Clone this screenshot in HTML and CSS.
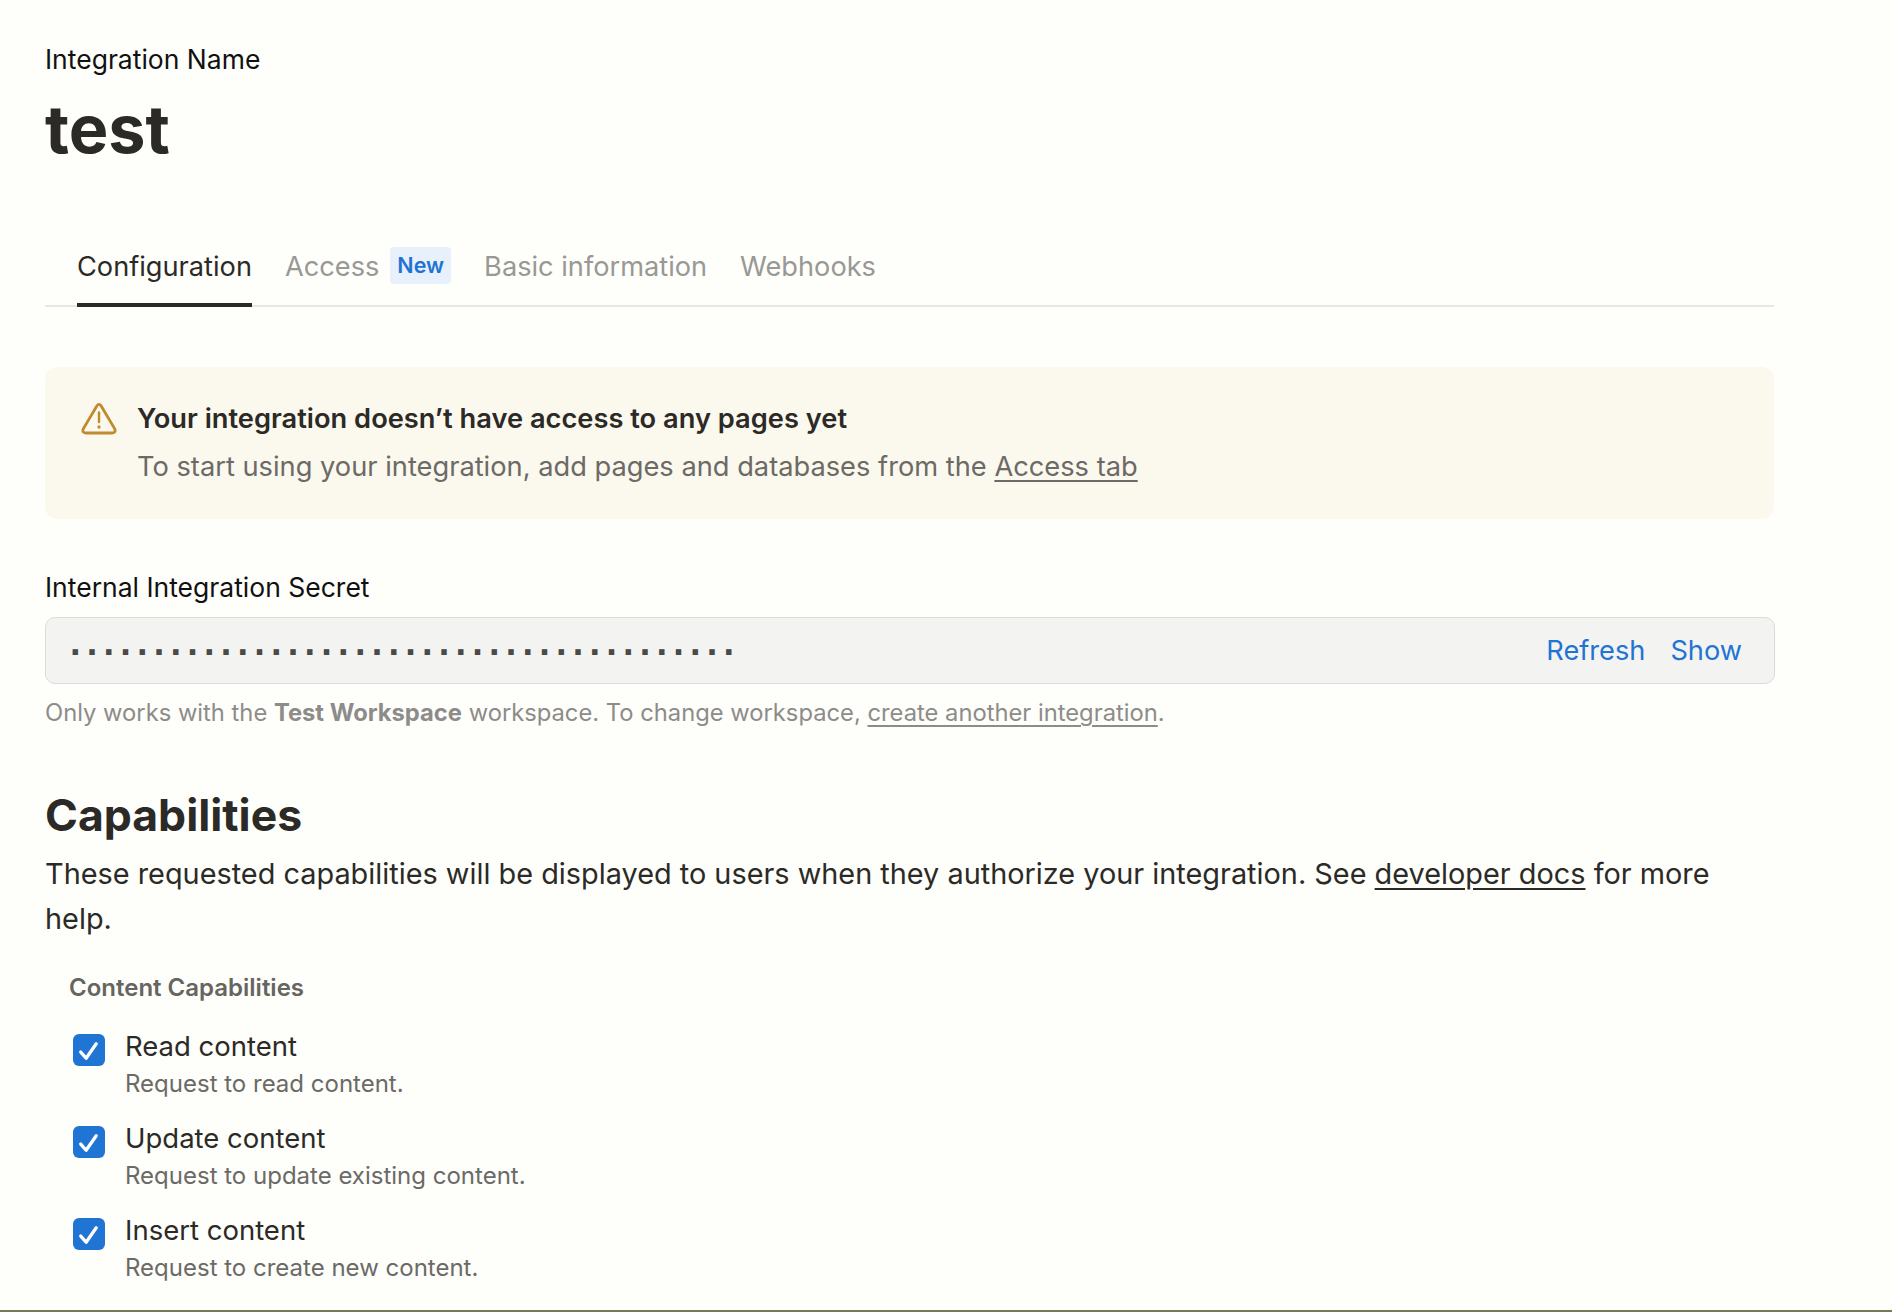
FILE: index.html
```html
<!DOCTYPE html>
<html lang="en">
<head>
<meta charset="utf-8">
<title>test</title>
<link rel="stylesheet" href="styles.css">
</head>
<body>
<main class="page">
  <div class="name-label">Integration Name</div>
  <h1 class="title">test</h1>
  <nav class="tabs">
    <a class="tab active">Configuration</a>
    <a class="tab">Access<span class="badge">New</span></a>
    <a class="tab">Basic information</a>
    <a class="tab">Webhooks</a>
  </nav>
  <section class="banner">
    <svg class="warn" viewBox="0 0 36 33" width="36" height="33" fill="none" stroke="#c08a2e" stroke-width="2.8" stroke-linejoin="round">
      <path d="M15.8 4 Q18 0.8 20.2 4 L33.6 26.6 Q35.4 31 31 31 H5 Q0.6 31 2.4 26.6 Z"/>
      <path d="M18 10.5 V20" stroke-linecap="round" stroke-width="2.4"/>
      <circle cx="18" cy="25" r="0.7" stroke-width="2"/>
    </svg>
    <div class="banner-text">
      <div class="banner-title">Your integration doesn’t have access to any pages yet</div>
      <div class="banner-body">To start using your integration, add pages and databases from the <a class="u">Access tab</a></div>
    </div>
  </section>
  <div class="secret-label">Internal Integration Secret</div>
  <div class="secret">
    <span class="dots">........................................</span>
    <span class="actions"><a>Refresh</a><a>Show</a></span>
  </div>
  <p class="hint">Only works with the <b>Test Workspace</b> workspace. To change workspace, <a class="u">create another integration</a>.</p>
  <h2 class="heading">Capabilities</h2>
  <p class="lead">These requested capabilities will be displayed to users when they authorize your integration. See <a class="u">developer docs</a> <span>for more</span> <span>help.</span></p>
  <div class="group">
    <div class="group-title">Content Capabilities</div>
    <div class="cap">
      <span class="check"><svg viewBox="0 0 31 31" width="32" height="32" fill="none" stroke="#fff" stroke-width="3.2" stroke-linecap="round" stroke-linejoin="round"><path d="M7.5 17.5 L12.7 23.5 L22.5 9.5"/></svg></span>
      <div><div class="cap-name">Read content</div><div class="cap-desc">Request to read content.</div></div>
    </div>
    <div class="cap">
      <span class="check"><svg viewBox="0 0 31 31" width="32" height="32" fill="none" stroke="#fff" stroke-width="3.2" stroke-linecap="round" stroke-linejoin="round"><path d="M7.5 17.5 L12.7 23.5 L22.5 9.5"/></svg></span>
      <div><div class="cap-name">Update content</div><div class="cap-desc">Request to update existing content.</div></div>
    </div>
    <div class="cap">
      <span class="check"><svg viewBox="0 0 31 31" width="32" height="32" fill="none" stroke="#fff" stroke-width="3.2" stroke-linecap="round" stroke-linejoin="round"><path d="M7.5 17.5 L12.7 23.5 L22.5 9.5"/></svg></span>
      <div><div class="cap-name">Insert content</div><div class="cap-desc">Request to create new content.</div></div>
    </div>
  </div>
</main>
</body>
</html>
```
FILE: styles.css
```css
* { box-sizing: border-box; }
html, body { margin: 0; height: 100%; }
body {
  background: #fefefb;
  font-family: Inter, "Noto Sans", sans-serif;
  color: #2b2a27;
  overflow: hidden;
}
.page {
  height: 1312px;
  padding: 43px 118px 0 45px;
  border-bottom: 2px solid #6f7c55;
  overflow: hidden;
}
.name-label { font-size: 26.5px; line-height: 32px; color: #111; }
.title { margin: 10px 0 0; font-size: 66.5px; line-height: 88px; font-weight: 700; color: #2b2a27; }
.tabs {
  display: flex;
  gap: 33px;
  margin-top: 66px;
  padding-left: 32px;
  border-bottom: 2px solid #e8e7e4;
  height: 68px;
}
.tab { font-size: 27.2px; line-height: 36px; color: #999895; padding-top: 10px; display: flex; height: 68px; }
.tab.active { color: #2b2a27; border-bottom: 4px solid #2b2a27; }
.badge {
  margin: -2px 0 0 11px;
  height: 37px;
  padding: 0 7px;
  border-radius: 4px;
  background: #e8f1fb;
  color: #1f74d4;
  font-size: 21.5px;
  font-weight: 600;
  line-height: 36px;
}
.banner {
  display: flex;
  margin-top: 60px;
  height: 152px;
  padding: 34px 36px;
  background: #fbf8ee;
  border-radius: 12px;
  gap: 20px;
}
.warn { flex: none; margin-top: 1px; }
.banner-title { font-size: 27.25px; line-height: 36px; font-weight: 600; color: #2b2a27; }
.banner-body { margin-top: 12px; font-size: 27.25px; line-height: 36px; color: #6b6a66; }
.u { text-decoration: underline; text-underline-offset: 4px; }
.secret-label { margin-top: 52px; font-size: 26.5px; line-height: 32px; color: #111; }
.secret {
  display: flex;
  justify-content: space-between;
  align-items: center;
  margin-top: 14px;
  width: 1730px;
  height: 67px;
  padding: 0 32px 0 24px;
  background: #f3f3f1;
  border: 1px solid #dcdbd8;
  border-radius: 10px;
}
.dots {
  font-family: "Liberation Sans", sans-serif;
  font-size: 38px;
  line-height: 38px;
  font-weight: 700;
  letter-spacing: 6.2px;
  color: #4a4a47;
  padding-bottom: 18px;
}
.actions { display: flex; gap: 25px; font-size: 27.2px; color: #1f74d4; }
.hint { margin: 13px 0 0; font-size: 23.75px; line-height: 32px; color: #8d8c89; }
.hint b { font-weight: 700; }
.heading { margin: 58px 0 0; font-size: 44.5px; line-height: 56px; font-weight: 700; color: #2b2a27; }
.lead { margin: 9px 0 0; font-size: 28.87px; line-height: 44.5px; color: #2b2a27; }
.group { padding-left: 24px; margin-top: 31px; }
.group-title { font-size: 24px; line-height: 32px; font-weight: 600; color: #666560; }
.cap { display: flex; gap: 20px; height: 92px; padding: 0 4px; }
.group-title + .cap { margin-top: 30px; }
.check { flex: none; width: 32px; height: 32px; background: #1f74d4; border-radius: 6px; display: block; }
.check svg { display: block; }
.cap-name { font-size: 27.5px; line-height: 36px; color: #2b2a27; margin-top: -6.5px; }
.cap-desc { font-size: 24px; line-height: 32px; color: #6b6a66; margin-top: 4px; }
```
